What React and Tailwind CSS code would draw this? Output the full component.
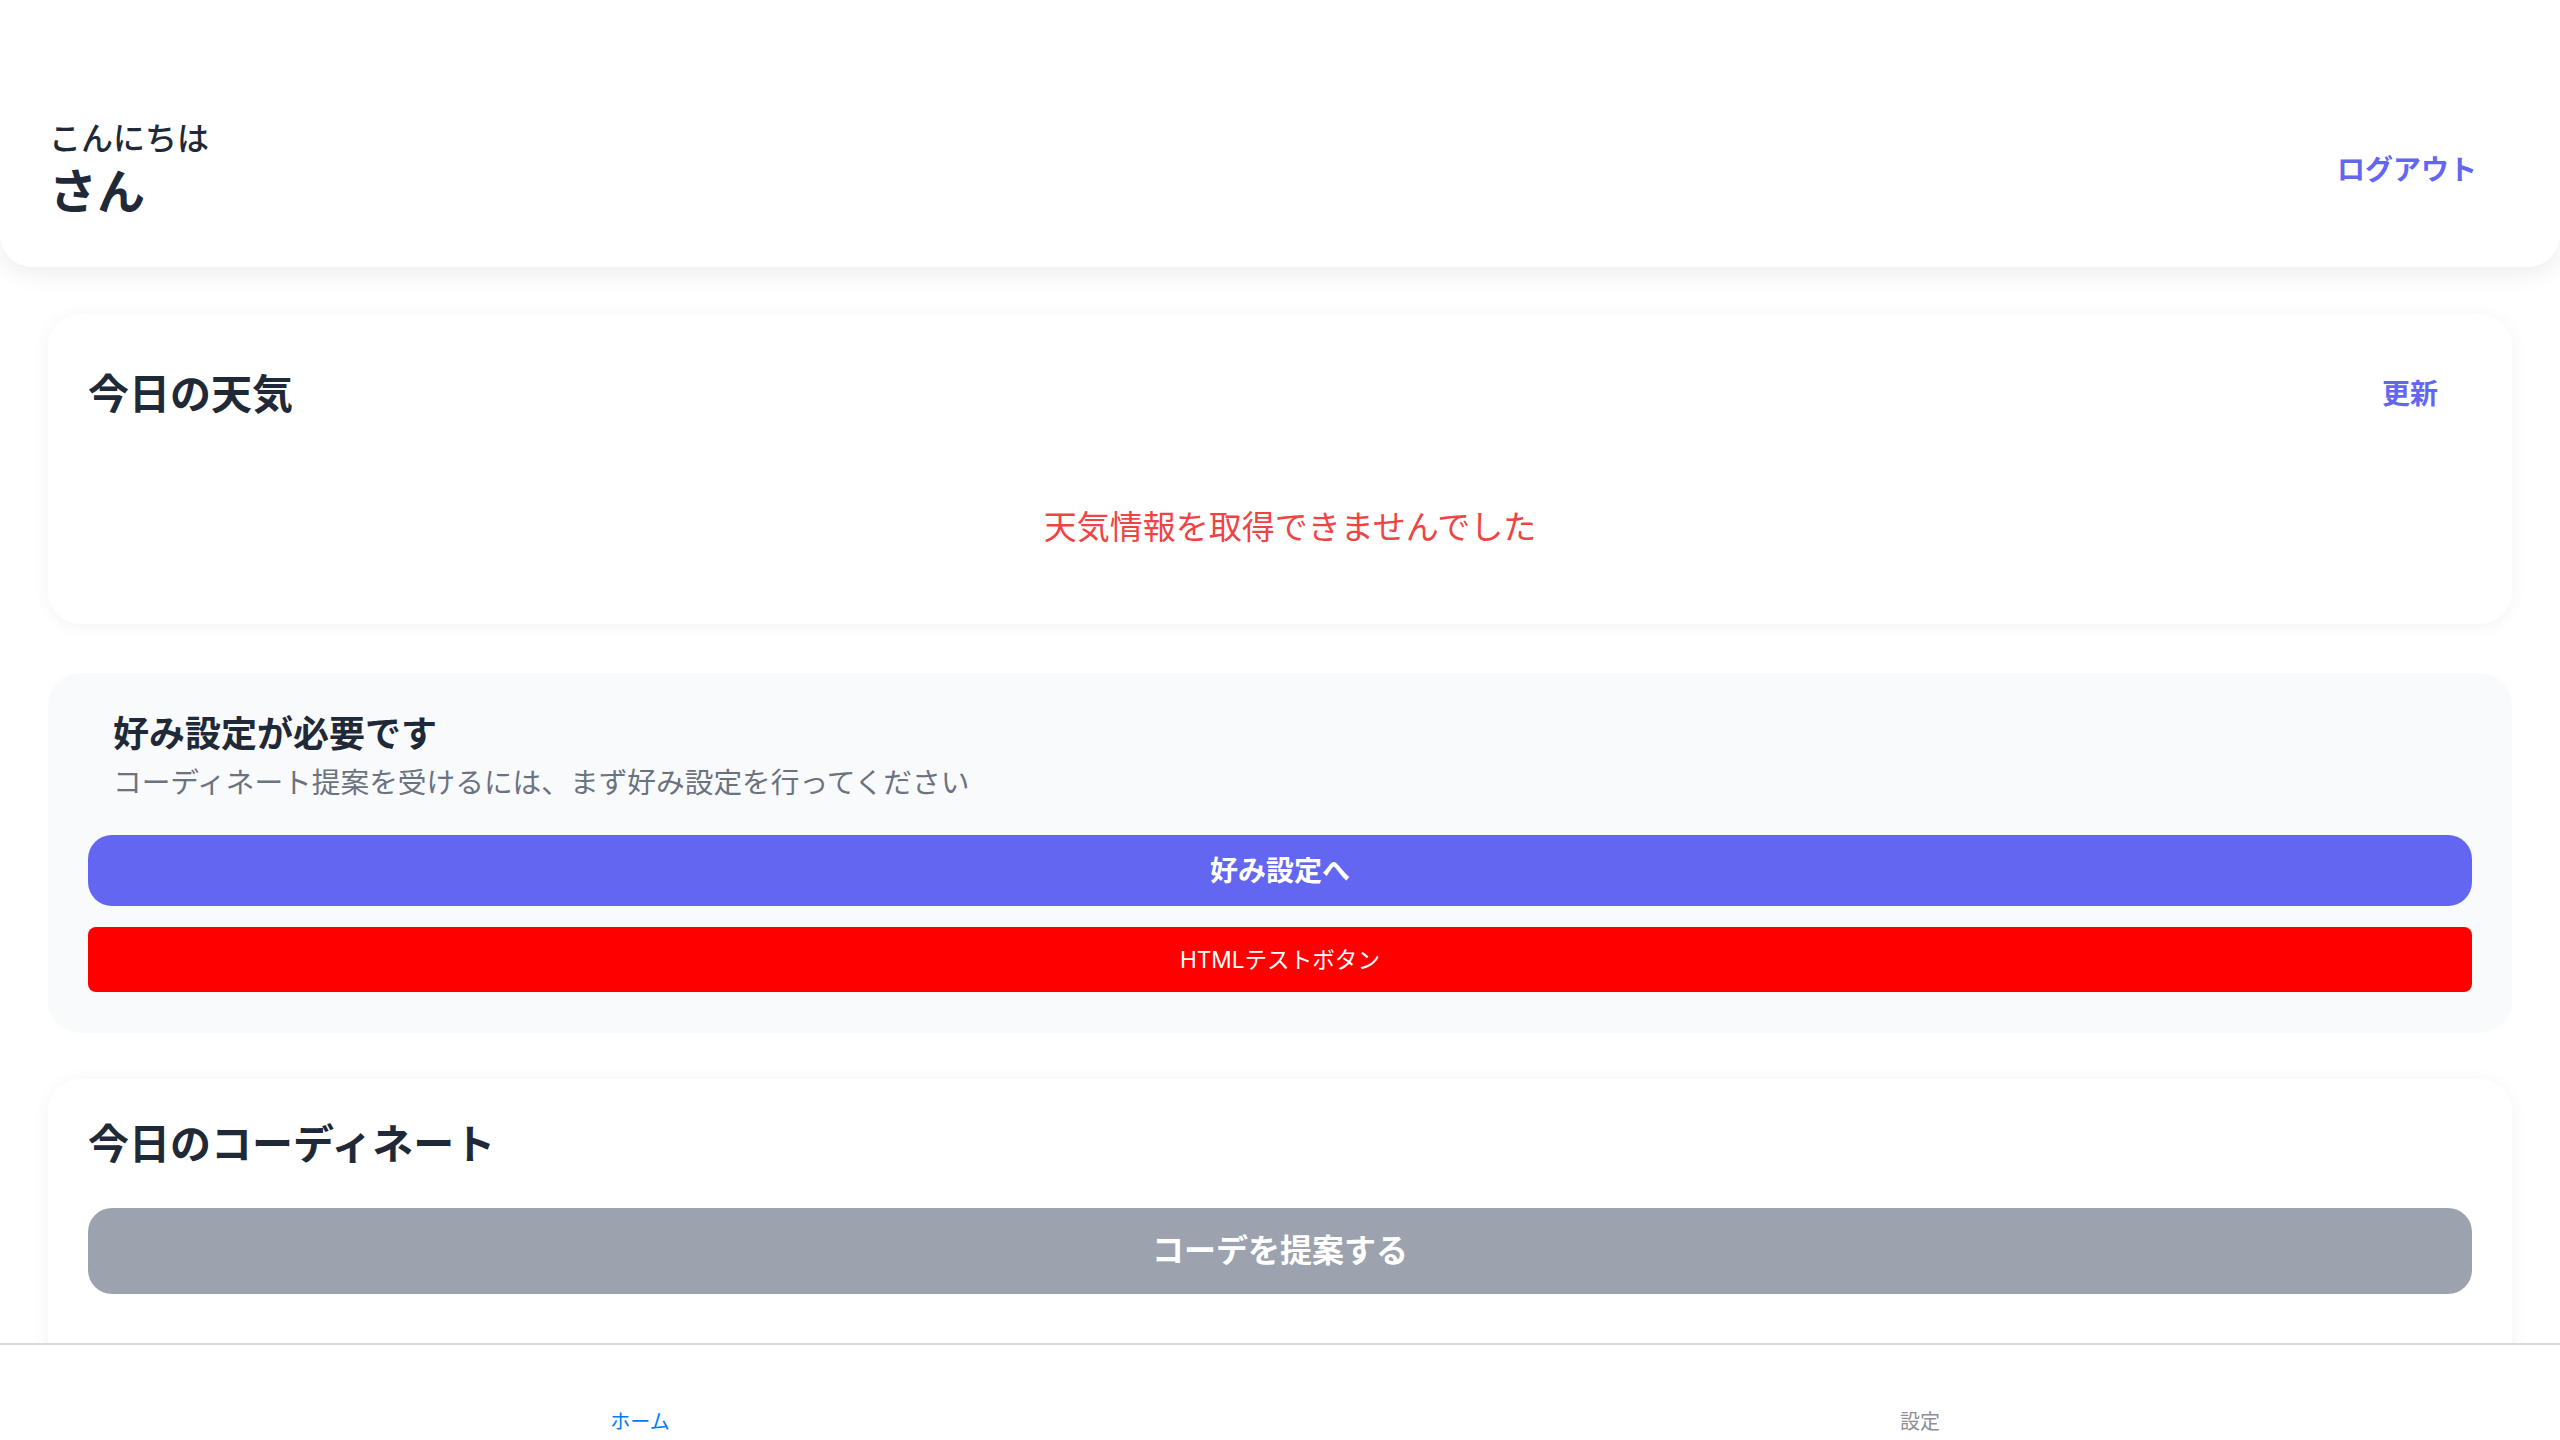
import React from "react";

// home screen: greeting header, weather card, preference prompt, outfit card, tab bar
const font = "font-['Inter','Noto_Sans_CJK_JP',sans-serif]";

function Header({ name = "" }) {
  return (
    <header className="rounded-b-[32px] bg-white px-[49px] pt-[119px] pb-[47px] shadow-[0_6px_24px_rgba(0,0,0,0.08)]">
      <div className="flex items-center justify-between">
        <div>
          <p className="text-[32px] font-medium leading-[40px] text-[#1f2937]">こんにちは</p>
          <h1 className="mt-[5px] text-[48px] font-bold leading-[56px] text-[#1f2937]">{name}さん</h1>
        </div>
        <button className="mr-[34px] text-[28px] font-semibold leading-[40px] text-[#6366f1]">
          ログアウト
        </button>
      </div>
    </header>
  );
}

function WeatherCard() {
  return (
    <section className="mx-[48px] mt-[47px] rounded-[32px] bg-white px-[40px] pt-[40px] pb-[40px] shadow-[0_2px_18px_rgba(0,0,0,0.05)]">
      <div className="flex h-[80px] items-center justify-between">
        <h2 className="text-[41px] font-bold leading-[48px] text-[#1f2937]">今日の天気</h2>
        <button className="mr-[34px] text-[28px] font-semibold leading-[40px] text-[#6366f1]">更新</button>
      </div>
      <p className="pt-[69px] pb-[33px] pl-[20px] text-center text-[33px] leading-[48px] text-[#ef4444]">
        天気情報を取得できませんでした
      </p>
    </section>
  );
}

function PreferenceCard() {
  return (
    <section className="mx-[48px] mt-[49px] rounded-[32px] bg-[#f9fafb] px-[40px] pt-[39px] pb-[41px]">
      <div className="px-[25px]">
        <h2 className="text-[36px] font-bold leading-[44px] text-[#1f2937]">好み設定が必要です</h2>
        <p className="mt-[7px] text-[28.7px] leading-[40px] text-[#6b7280]">
          コーディネート提案を受けるには、まず好み設定を行ってください
        </p>
      </div>
      <button className="mt-[32px] flex h-[71px] w-full items-center justify-center rounded-[24px] bg-[#6366f1] text-[28px] font-bold text-white">
        好み設定へ
      </button>
      <button className="mt-[21px] flex h-[65px] w-full items-center justify-center rounded-[8px] bg-[#ff0000] text-[22.6px] text-white">
        HTMLテストボタン
      </button>
    </section>
  );
}

function OutfitCard() {
  return (
    <section className="mx-[48px] mt-[46px] rounded-[32px] bg-white px-[40px] pt-[41px] pb-[80px] shadow-[0_2px_18px_rgba(0,0,0,0.05)]">
      <h2 className="text-[41px] font-bold leading-[48px] text-[#1f2937]">今日のコーディネート</h2>
      <button className="mt-[40px] flex h-[86px] w-full items-center justify-center rounded-[24px] bg-[#9ca3af] text-[32px] font-bold text-white">
        コーデを提案する
      </button>
    </section>
  );
}

const tabs = [
  { label: "ホーム", active: true },
  { label: "設定", active: false },
];

function TabBar() {
  return (
    <nav className="flex h-[97px] shrink-0 border-t-2 border-[#d9d9d9] bg-white">
      {tabs.map((t) => (
        <div key={t.label} className="flex flex-1 flex-col items-center justify-end pb-[6px]">
          <span
            className={
              t.active
                ? "text-[20px] leading-[24px] text-[#007aff]"
                : "text-[20px] leading-[24px] text-[#8e8e93]"
            }
          >
            {t.label}
          </span>
        </div>
      ))}
    </nav>
  );
}

export default function App() {
  return (
    <div className={`flex h-screen w-full flex-col overflow-hidden bg-white ${font}`}>
      <main className="flex-1 overflow-hidden">
        <Header />
        <WeatherCard />
        <PreferenceCard />
        <OutfitCard />
      </main>
      <TabBar />
    </div>
  );
}
